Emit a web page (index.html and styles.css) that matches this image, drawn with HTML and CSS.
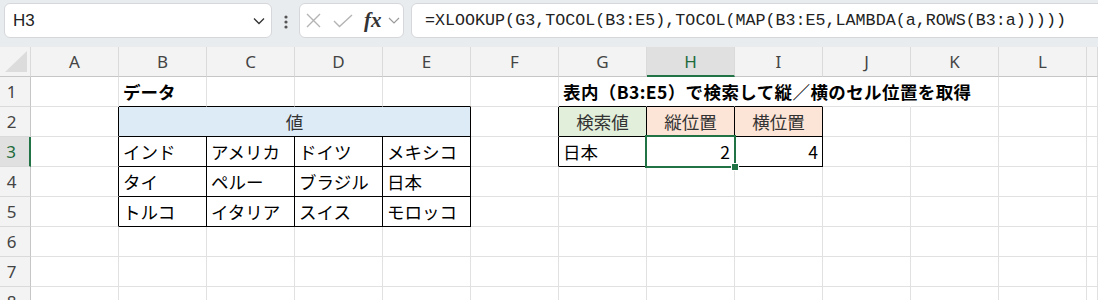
FILE: index.html
```html
<!DOCTYPE html>
<html lang="ja">

<head>
    <meta charset="UTF-8">
    <title>XLOOKUP</title>
    <link rel="stylesheet" href="styles.css">
</head>

<body>
<div class="topbar">
    <div class="box namebox">
        <span class="ref">H3</span>
        <svg width="12" height="8" viewBox="0 0 12 8"><polyline points="1,1.5 6,6.5 11,1.5" fill="none" stroke="#333" stroke-width="1.3"/></svg>
    </div>
    <div class="dots">
        <svg width="4" height="14" viewBox="0 0 4 14"><circle cx="2" cy="2" r="1.6" fill="#555"/><circle cx="2" cy="7" r="1.6" fill="#555"/><circle cx="2" cy="12" r="1.6" fill="#555"/></svg>
    </div>
    <div class="box fxbox">
        <svg class="ico-x" width="15" height="15" viewBox="0 0 15 15"><path d="M1 1L14 14M14 1L1 14" stroke="#b4b4b4" stroke-width="1.4"/></svg>
        <svg class="ico-ok" width="20" height="14" viewBox="0 0 20 14"><polyline points="1,7 6.5,12.5 19,1" fill="none" stroke="#b4b4b4" stroke-width="1.4"/></svg>
        <span class="fx">fx</span>
        <svg class="ico-down" width="12" height="7" viewBox="0 0 12 7"><polyline points="1,1 6,6 11,1" fill="none" stroke="#9a9a9a" stroke-width="1.2"/></svg>
    </div>
    <div class="box formula">=XLOOKUP(G3,TOCOL(B3:E5),TOCOL(MAP(B3:E5,LAMBDA(a,ROWS(B3:a)))))</div>
</div>

<div class="sheet">
    <!-- 列見出し -->
    <div class="c h corner"><svg width="23" height="21" viewBox="0 0 23 21"><polygon points="22,0 22,21 0,21" fill="#dcdcdc"/></svg></div>
    <div class="c h">A</div>
    <div class="c h">B</div>
    <div class="c h">C</div>
    <div class="c h">D</div>
    <div class="c h">E</div>
    <div class="c h">F</div>
    <div class="c h">G</div>
    <div class="c h hs">H</div>
    <div class="c h">I</div>
    <div class="c h">J</div>
    <div class="c h">K</div>
    <div class="c h">L</div>
    <div class="c h"></div>

    <!-- 1 -->
    <div class="c r">1</div>
    <div class="c"></div>
    <div class="c bb t">データ</div>
    <div class="c bb"></div>
    <div class="c bb"></div>
    <div class="c bb"></div>
    <div class="c"></div>
    <div class="c bb nr t title">表内（B3:E5）で検索して縦／横のセル位置を取得</div>
    <div class="c bb nr"></div>
    <div class="c bb nr"></div>
    <div class="c nr"></div>
    <div class="c"></div>
    <div class="c"></div>
    <div class="c"></div>

    <!-- 2 -->
    <div class="c r">2</div>
    <div class="c br"></div>
    <div class="c bb br blue mid merged">値</div>
    <div class="c br"></div>
    <div class="c bb br green mid">検索値</div>
    <div class="c bb br peach mid">縦位置</div>
    <div class="c bb br peach mid">横位置</div>
    <div class="c"></div>
    <div class="c"></div>
    <div class="c"></div>
    <div class="c"></div>

    <!-- 3 -->
    <div class="c r rs">3</div>
    <div class="c br"></div>
    <div class="c bb br">インド</div>
    <div class="c bb br">アメリカ</div>
    <div class="c bb br">ドイツ</div>
    <div class="c bb br">メキシコ</div>
    <div class="c br"></div>
    <div class="c bb br">日本</div>
    <div class="c bb br num sel">2</div>
    <div class="c bb br num">4</div>
    <div class="c"></div>
    <div class="c"></div>
    <div class="c"></div>
    <div class="c"></div>

    <!-- 4 -->
    <div class="c r">4</div>
    <div class="c br"></div>
    <div class="c bb br">タイ</div>
    <div class="c bb br">ペルー</div>
    <div class="c bb br">ブラジル</div>
    <div class="c bb br">日本</div>
    <div class="c"></div>
    <div class="c"></div>
    <div class="c"></div>
    <div class="c"></div>
    <div class="c"></div>
    <div class="c"></div>
    <div class="c"></div>
    <div class="c"></div>

    <!-- 5 -->
    <div class="c r">5</div>
    <div class="c br"></div>
    <div class="c bb br">トルコ</div>
    <div class="c bb br">イタリア</div>
    <div class="c bb br">スイス</div>
    <div class="c bb br">モロッコ</div>
    <div class="c"></div>
    <div class="c"></div>
    <div class="c"></div>
    <div class="c"></div>
    <div class="c"></div>
    <div class="c"></div>
    <div class="c"></div>
    <div class="c"></div>

    <!-- 6 -->
    <div class="c r">6</div>
    <div class="c"></div><div class="c"></div><div class="c"></div><div class="c"></div><div class="c"></div><div class="c"></div>
    <div class="c"></div><div class="c"></div><div class="c"></div><div class="c"></div><div class="c"></div><div class="c"></div><div class="c"></div>

    <!-- 7 -->
    <div class="c r">7</div>
    <div class="c"></div><div class="c"></div><div class="c"></div><div class="c"></div><div class="c"></div><div class="c"></div>
    <div class="c"></div><div class="c"></div><div class="c"></div><div class="c"></div><div class="c"></div><div class="c"></div><div class="c"></div>

    <!-- 8 -->
    <div class="c r">8</div>
    <div class="c"></div><div class="c"></div><div class="c"></div><div class="c"></div><div class="c"></div><div class="c"></div>
    <div class="c"></div><div class="c"></div><div class="c"></div><div class="c"></div><div class="c"></div><div class="c"></div><div class="c"></div>
</div>
</body>

</html>
```

FILE: styles.css
```css
body {
    margin: 0;
    background: #fff;
    font-family: "Noto Sans CJK JP", sans-serif;
    overflow: hidden;
}

/* 数式バー */
.topbar {
    height: 47px;
    box-sizing: border-box;
    padding: 3px 0 0 4px;
    background: #e9ecef;
    display: flex;
    align-items: flex-start;
    overflow: hidden;
}

.box {
    height: 35px;
    box-sizing: border-box;
    background: #fff;
    border: 1px solid #d5d7da;
    border-radius: 6px;
    display: flex;
    align-items: center;
    flex-shrink: 0;
}

.namebox {
    width: 268px;
    padding: 0 6px 0 8px;
    font-family: "Liberation Sans", sans-serif;
    font-size: 17px;
    color: #222;
}

.namebox .ref {
    flex: 1;
}

.dots {
    width: 27px;
    padding-top: 12px;
    display: flex;
    justify-content: center;
    flex-shrink: 0;
}

.fxbox {
    width: 105px;
    padding-left: 6px;
}

.ico-ok {
    margin-left: 12px;
}

.fx {
    margin-left: 11px;
    font-family: "Liberation Serif", serif;
    font-style: italic;
    font-weight: bold;
    font-size: 21px;
    color: #333;
    line-height: 1;
}

.ico-down {
    margin-left: 6px;
}

.formula {
    width: 720px;
    margin-left: 7px;
    padding-left: 13px;
    font-family: "Liberation Mono", monospace;
    font-size: 16.7px;
    color: #222;
    white-space: nowrap;
}

/* シート */
.sheet {
    display: grid;
    grid-template-columns: 31px repeat(12, 88px) 1fr;
    grid-auto-rows: 30px;
}

.c {
    box-sizing: border-box;
    min-width: 0;
    padding: 0 4px;
    border-right: 1px solid #e1e1e1;
    border-bottom: 1px solid #e1e1e1;
    display: flex;
    align-items: center;
    font-size: 17.5px;
    color: #000;
    white-space: nowrap;
}

.h {
    justify-content: center;
    padding: 0;
    background: #f3f3f3;
    border-right-color: #dadada;
    border-bottom-color: #c6c6c6;
    font-family: "Noto Sans", sans-serif;
    font-size: 17px;
    color: #444;
}

.corner {
    align-items: flex-end;
    padding-bottom: 4px;
    justify-content: flex-start;
    padding-left: 5px;
}

.hs {
    background: #e0e0e0;
    border-bottom: 2px solid #217346;
    color: #1e6b3c;
}

.r {
    justify-content: center;
    padding: 0 7px 0 0;
    background: #f3f3f3;
    border-right-color: #c6c6c6;
    border-bottom-color: #dadada;
    font-family: "Noto Sans", sans-serif;
    font-size: 17px;
    color: #444;
}

.rs {
    background: #e0e0e0;
    border-right: 2px solid #217346;
    color: #1e6b3c;
}

.t {
    font-weight: bold;
}

.title {
    letter-spacing: 0.4px;
}

.bb {
    border-bottom-color: #000;
}

.br {
    border-right-color: #000;
}

.nr {
    border-right-color: transparent;
}

.merged {
    grid-column: span 4;
}

.mid {
    justify-content: center;
    color: #333;
}

.blue {
    background: #ddebf7;
}

.green {
    background: #e2efda;
}

.peach {
    background: #fce4d6;
}

.num {
    justify-content: flex-end;
}

/* 選択セル */
.sel {
    position: relative;
    z-index: 2;
}

.sel::after {
    content: "";
    position: absolute;
    top: -2px;
    left: -2px;
    right: -2px;
    bottom: -2px;
    border: 2px solid #217346;
}

.sel::before {
    content: "";
    position: absolute;
    right: -5px;
    bottom: -5px;
    width: 6px;
    height: 6px;
    background: #217346;
    border: 1px solid #fff;
    z-index: 1;
}
```
